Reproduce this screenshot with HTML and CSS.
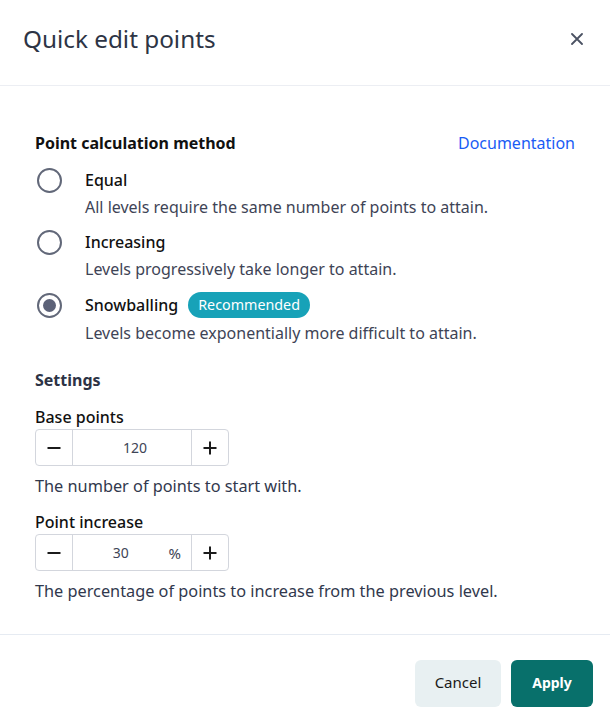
FILE: index.html
```html
<!DOCTYPE html>
<html lang="en">
<head>
<meta charset="utf-8">
<title>Quick edit points</title>
<link rel="stylesheet" href="styles.css">
</head>
<body>
<div class="modal">
  <header class="header">
    <h1 class="title">Quick edit points</h1>
    <button class="close" aria-label="Close">
      <svg width="12" height="12" viewBox="0 0 12 12"><path d="M1 1L11 11M11 1L1 11" stroke="#4b5263" stroke-width="1.8" stroke-linecap="round"/></svg>
    </button>
  </header>
  <main class="body">
    <div class="section-head">
      <span class="heading">Point calculation method</span>
      <a class="doc-link" href="#">Documentation</a>
    </div>
    <div class="options">
      <div class="option">
        <span class="radio-col"><span class="radio"></span></span>
        <div class="option-text">
          <div class="option-label">Equal</div>
          <div class="option-desc">All levels require the same number of points to attain.</div>
        </div>
      </div>
      <div class="option">
        <span class="radio-col"><span class="radio"></span></span>
        <div class="option-text">
          <div class="option-label">Increasing</div>
          <div class="option-desc">Levels progressively take longer to attain.</div>
        </div>
      </div>
      <div class="option">
        <span class="radio-col radio-col-tall"><span class="radio radio-checked"></span></span>
        <div class="option-text">
          <div class="option-label option-label-tall">Snowballing <span class="badge">Recommended</span></div>
          <div class="option-desc">Levels become exponentially more difficult to attain.</div>
        </div>
      </div>
    </div>

    <div class="settings-title">Settings</div>

    <div class="field">
      <div class="field-label">Base points</div>
      <div class="stepper">
        <span class="step-btn"><svg width="16" height="16" viewBox="0 0 16 16"><path d="M1.5 8H14.5" stroke="#1b1b1b" stroke-width="2"/></svg></span>
        <span class="step-value"><span class="value value-plain">120</span></span>
        <span class="step-btn"><svg width="16" height="16" viewBox="0 0 16 16"><path d="M1.5 8H14.5M8 1.5V14.5" stroke="#1b1b1b" stroke-width="2"/></svg></span>
      </div>
      <div class="field-desc">The number of points to start with.</div>
    </div>

    <div class="field field-second">
      <div class="field-label">Point increase</div>
      <div class="stepper">
        <span class="step-btn"><svg width="16" height="16" viewBox="0 0 16 16"><path d="M1.5 8H14.5" stroke="#1b1b1b" stroke-width="2"/></svg></span>
        <span class="step-value"><span class="value">30</span><span class="suffix">%</span></span>
        <span class="step-btn"><svg width="16" height="16" viewBox="0 0 16 16"><path d="M1.5 8H14.5M8 1.5V14.5" stroke="#1b1b1b" stroke-width="2"/></svg></span>
      </div>
      <div class="field-desc">The percentage of points to increase from the previous level.</div>
    </div>
  </main>
  <footer class="footer">
    <button class="btn btn-cancel">Cancel</button>
    <button class="btn btn-apply">Apply</button>
  </footer>
</div>
</body>
</html>
```
FILE: styles.css
```css
* { box-sizing: border-box; }
html, body { margin: 0; padding: 0; background: #fff; }
body {
  font-family: "Noto Sans", "Open Sans", sans-serif;
  color: #151515;
  width: 610px;
  height: 714px;
  overflow: hidden;
}
.modal { display: flex; flex-direction: column; height: 714px; }

.header {
  height: 86px;
  padding: 0 27px 7px 23px;
  display: flex;
  align-items: center;
  justify-content: space-between;
  border-bottom: 1px solid #eceef3;
}
.title {
  margin: 0;
  font-size: 24.3px;
  font-weight: 400;
  color: #2d3445;
  line-height: 32px;
}
.close {
  border: 0;
  background: transparent;
  padding: 0;
  width: 12px;
  height: 12px;
  display: flex;
}

.body { padding: 45px 35px 0 35px; flex: 1; }
.section-head {
  display: flex;
  justify-content: space-between;
  align-items: center;
  height: 24px;
}
.heading { font-size: 16px; font-weight: 700; color: #111; line-height: 24px; }
.doc-link { font-size: 16px; color: #1a5cf5; text-decoration: none; line-height: 24px; }

.options { margin-top: 13px; display: flex; flex-direction: column; gap: 11px; }
.option { display: flex; }
.radio-col { width: 50px; height: 24px; display: flex; align-items: center; padding-left: 2px; }
.radio-col-tall { height: 26px; }
.radio {
  width: 25px;
  height: 25px;
  border-radius: 50%;
  border: 2px solid #626879;
  display: flex;
  align-items: center;
  justify-content: center;
}
.radio-checked::after {
  content: "";
  width: 13px;
  height: 13px;
  border-radius: 50%;
  background: #5c6278;
}
.option-label { font-size: 16px; font-weight: 500; line-height: 24px; color: #111; display: flex; align-items: center; gap: 10px; }
.option-label-tall { height: 26px; }
.badge {
  display: inline-flex;
  align-items: center;
  height: 26px;
  padding: 0 10px;
  border-radius: 13px;
  background: #17a2b8;
  color: #fff;
  font-size: 14.3px;
  font-weight: 400;
}
.option-desc { margin-top: 3px; font-size: 16px; line-height: 24px; color: #3e4456; }

.settings-title { margin-top: 23px; font-size: 16px; font-weight: 700; line-height: 24px; color: #2d3345; }

.field { margin-top: 13px; }
.field-second { margin-top: 12px; }
.field-label { font-size: 16px; font-weight: 500; line-height: 24px; color: #111; }
.stepper {
  display: flex;
  width: 194px;
  height: 37px;
  border: 1px solid #d3d6dd;
  border-radius: 4px;
}
.step-btn {
  width: 36px;
  display: flex;
  align-items: center;
  justify-content: center;
}
.step-value {
  flex: 1;
  display: flex;
  align-items: center;
  border-left: 1px solid #d3d6dd;
  border-right: 1px solid #d3d6dd;
  font-size: 14px;
  color: #3e4456;
}
.value { flex: 1; text-align: center; }
.value-plain { padding-left: 6px; }
.suffix { padding-right: 10px; font-size: 15px; }
.field-desc { margin-top: 8px; font-size: 16.3px; line-height: 24px; color: #31384d; }

.footer {
  height: 80px;
  border-top: 1px solid #e6ebf2;
  display: flex;
  justify-content: flex-end;
  align-items: flex-start;
  padding: 25px 17px 0 0;
  gap: 10px;
}
.btn {
  height: 47px;
  border: 0;
  border-radius: 6px;
  font-family: inherit;
  padding: 0 0 3px 0;
}
.btn-cancel { width: 86px; background: #e8f0f2; color: #1a1a1a; font-weight: 400; font-size: 15px; }
.btn-apply { width: 82px; background: #08706b; color: #fff; font-weight: 700; font-size: 14px; }
```
